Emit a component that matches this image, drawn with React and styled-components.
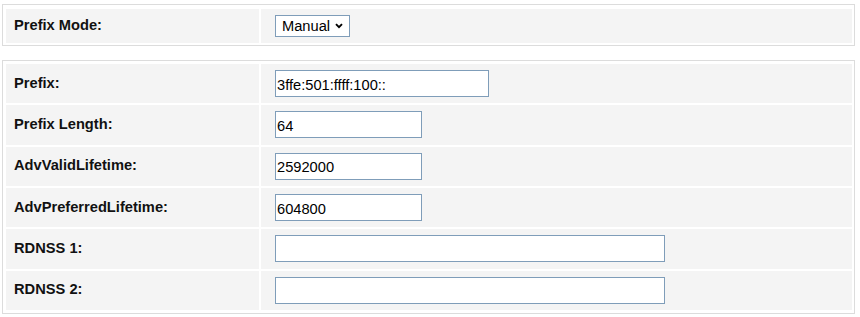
import React from "react";
import styled, { createGlobalStyle } from "styled-components";

const Global = createGlobalStyle`
  html, body { margin: 0; padding: 0; background: #ffffff; }
  body { font-family: "Liberation Sans", Arial, sans-serif; font-size: 14.67px; color: #000; }
`;

const Page = styled.div`
  padding: 4px 5px 0 2px;
  display: flex;
  flex-direction: column;
  gap: 14px;
`;

const Panel = styled.div`
  border: 1px solid #dcdcdc;
  padding: ${(p) => (p.$compact ? "4px 2px 2px 3px" : "3px 2px 3px 3px")};
`;

const Grid = styled.div`
  display: grid;
  grid-template-columns: 253px 1fr;
  grid-auto-rows: ${(p) => p.$rowHeight};
  gap: 2px;
`;

const LabelCell = styled.div`
  background: #f4f4f4;
  display: flex;
  align-items: center;
  padding: 0 0 2px 8px;
  font-weight: bold;
  font-size: 14.67px;
  color: #111;
`;

const ValueCell = styled.div`
  background: #f4f4f4;
  display: flex;
  align-items: center;
  padding-left: 14px;
`;

const TextInput = styled.input`
  box-sizing: border-box;
  width: ${(p) => p.$w}px;
  height: 27px;
  margin: 0;
  padding: 2px 1px 0 1px;
  border: 1px solid #7f9db9;
  border-radius: 0;
  background: #fff;
  font-family: "Liberation Sans", Arial, sans-serif;
  font-size: 14.67px;
  color: #000;
  outline: none;
`;

const SelectWrap = styled.div`
  position: relative;
  width: 75px;
  height: 22px;
`;

const Select = styled.select`
  appearance: none;
  -webkit-appearance: none;
  box-sizing: border-box;
  width: 100%;
  height: 100%;
  margin: 0;
  padding: 0 0 0 6px;
  border: 1px solid #7f9db9;
  border-radius: 0;
  background: #fff;
  font-family: "Liberation Sans", Arial, sans-serif;
  font-size: 14.67px;
  color: #000;
  outline: none;
`;

const Chevron = styled.svg`
  position: absolute;
  right: 7px;
  top: 8px;
  width: 8px;
  height: 6px;
  pointer-events: none;
`;

const rows = [
  { label: "Prefix:", value: "3ffe:501:ffff:100::", w: 214 },
  { label: "Prefix Length:", value: "64", w: 147 },
  { label: "AdvValidLifetime:", value: "2592000", w: 147 },
  { label: "AdvPreferredLifetime:", value: "604800", w: 147 },
  { label: "RDNSS 1:", value: "", w: 390 },
  { label: "RDNSS 2:", value: "", w: 390 },
];

export default function App() {
  return (
    <>
      <Global />
      <Page>
        <Panel $compact>
          <Grid $rowHeight="34px">
            <LabelCell>Prefix Mode:</LabelCell>
            <ValueCell>
              <SelectWrap>
                <Select defaultValue="manual">
                  <option value="manual">Manual</option>
                  <option value="auto">Auto</option>
                </Select>
                <Chevron viewBox="0 0 8 6">
                  <path d="M1 1.2 L4 4.2 L7 1.2" fill="none" stroke="#000" strokeWidth="1.9" />
                </Chevron>
              </SelectWrap>
            </ValueCell>
          </Grid>
        </Panel>
        <Panel>
          <Grid $rowHeight="39.33px">
            {rows.map((r) => (
              <React.Fragment key={r.label}>
                <LabelCell>{r.label}</LabelCell>
                <ValueCell>
                  <TextInput $w={r.w} defaultValue={r.value} />
                </ValueCell>
              </React.Fragment>
            ))}
          </Grid>
        </Panel>
      </Page>
    </>
  );
}
